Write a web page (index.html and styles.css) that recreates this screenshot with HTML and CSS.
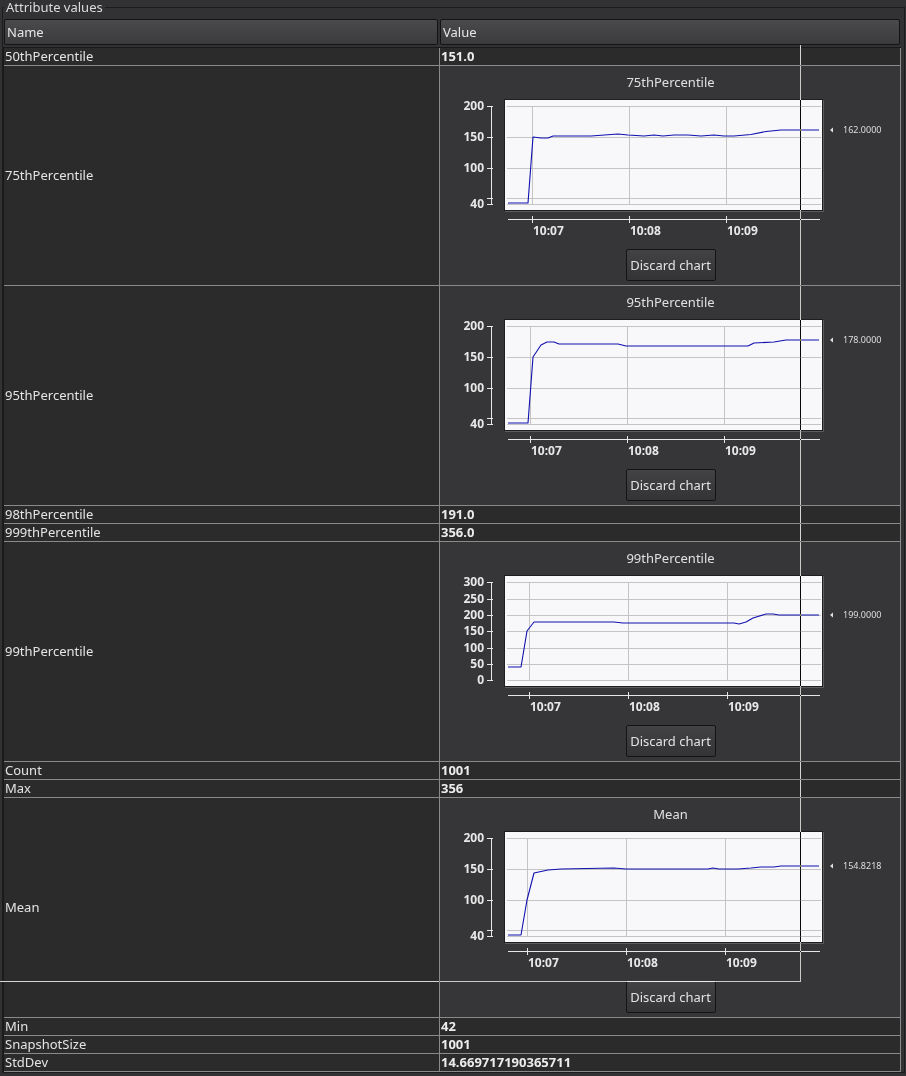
FILE: index.html
```html
<!DOCTYPE html>
<html lang="en">
<head>
  <meta charset="UTF-8" />
  <title>Attribute values</title>
  <link rel="stylesheet" href="styles.css">
</head>
<body>

  <fieldset class="attrs">
    <legend>Attribute values</legend>

    <div class="head">
      <div class="head-cell name-col">Name</div>
      <div class="head-cell value-col">Value</div>
    </div>

    <div class="rows">
      <div class="row">
        <div class="name">50thPercentile</div>
        <div class="value">151.0</div>
      </div>

      <div class="row tall">
        <div class="name">75thPercentile</div>
        <div class="value chart-cell">
          <div class="chart-title">75thPercentile</div>
          <svg class="chart" width="460" height="150">
            <rect class="plot" x="63.5" y="5.5" width="318" height="111"/>
            <path class="plot-edge" d="M64 117.5H382.5V6"/>
            <path class="grid" d="M66 12.5H380M66 43.5H380M66 74.5H380M66 104.5H380M66 110.5H380M91.5 12V111M188.5 12V111M285.5 12V111"/>
            <polyline class="series" points="67,109 87,109 92,43 100,44 107,44 112,42 150,42 177,40 187,41 203,42 213,41 222,42 233,41 247,41 260,42 273,41 283,42 293,42 310,40.5 325,37.5 340,36 378,36"/>
            <path class="axis" d="M50.5 12V111M46 12.5H52M46 43.5H52M46 74.5H52M46 104.5H52M46 110.5H52"/>
            <g class="ylab">
              <text x="43" y="16">200</text>
              <text x="43" y="47">150</text>
              <text x="43" y="78">100</text>
              <text x="43" y="114">40</text>
            </g>
            <path class="axis" d="M67 125.5H379M91.5 122V129M188.5 122V129M285.5 122V129"/>
            <g class="xlab">
              <text x="92" y="141">10:07</text>
              <text x="189" y="141">10:08</text>
              <text x="286" y="141">10:09</text>
            </g>
            <path class="marker" d="M389 36l3-2.5v5z"/>
            <text class="last" x="402" y="39">162.0000</text>
          </svg>
          <button class="discard">Discard chart</button>
        </div>
      </div>

      <div class="row tall">
        <div class="name">95thPercentile</div>
        <div class="value chart-cell">
          <div class="chart-title">95thPercentile</div>
          <svg class="chart" width="460" height="150">
            <rect class="plot" x="63.5" y="5.5" width="318" height="111"/>
            <path class="plot-edge" d="M64 117.5H382.5V6"/>
            <path class="grid" d="M66 12.5H380M66 43.5H380M66 74.5H380M66 104.5H380M66 110.5H380M89.5 12V111M186.5 12V111M283.5 12V111"/>
            <polyline class="series" points="67,109 87,109 92,43 100,31 106,28 113,28 118,30 177,30 185,32 307,32 313,29 333,28 345,26 378,26"/>
            <path class="axis" d="M50.5 12V111M46 12.5H52M46 43.5H52M46 74.5H52M46 104.5H52M46 110.5H52"/>
            <g class="ylab">
              <text x="43" y="16">200</text>
              <text x="43" y="47">150</text>
              <text x="43" y="78">100</text>
              <text x="43" y="114">40</text>
            </g>
            <path class="axis" d="M67 125.5H379M89.5 122V129M186.5 122V129M283.5 122V129"/>
            <g class="xlab">
              <text x="90" y="141">10:07</text>
              <text x="187" y="141">10:08</text>
              <text x="284" y="141">10:09</text>
            </g>
            <path class="marker" d="M389 26l3-2.5v5z"/>
            <text class="last" x="402" y="29">178.0000</text>
          </svg>
          <button class="discard">Discard chart</button>
        </div>
      </div>

      <div class="row">
        <div class="name">98thPercentile</div>
        <div class="value">191.0</div>
      </div>
      <div class="row">
        <div class="name">999thPercentile</div>
        <div class="value">356.0</div>
      </div>

      <div class="row tall">
        <div class="name">99thPercentile</div>
        <div class="value chart-cell">
          <div class="chart-title">99thPercentile</div>
          <svg class="chart" width="460" height="150">
            <rect class="plot" x="63.5" y="5.5" width="318" height="111"/>
            <path class="plot-edge" d="M64 117.5H382.5V6"/>
            <path class="grid" d="M66 12.5H380M66 29.5H380M66 45.5H380M66 61.5H380M66 78.5H380M66 94.5H380M66 110.5H380M88.5 12V111M187.5 12V111M286.5 12V111"/>
            <polyline class="series" points="67,97 80,97 86,61 93,52 173,52 182,53 293,53 298,54 305,52 312,48 325,44 332,44 338,45 378,45"/>
            <path class="axis" d="M50.5 12V111M46 12.5H52M46 29.5H52M46 45.5H52M46 61.5H52M46 78.5H52M46 94.5H52M46 110.5H52"/>
            <g class="ylab">
              <text x="43" y="16">300</text>
              <text x="43" y="33">250</text>
              <text x="43" y="49">200</text>
              <text x="43" y="65">150</text>
              <text x="43" y="82">100</text>
              <text x="43" y="98">50</text>
              <text x="43" y="114">0</text>
            </g>
            <path class="axis" d="M67 125.5H379M88.5 122V129M187.5 122V129M286.5 122V129"/>
            <g class="xlab">
              <text x="89" y="141">10:07</text>
              <text x="188" y="141">10:08</text>
              <text x="287" y="141">10:09</text>
            </g>
            <path class="marker" d="M389 45l3-2.5v5z"/>
            <text class="last" x="402" y="48">199.0000</text>
          </svg>
          <button class="discard">Discard chart</button>
        </div>
      </div>

      <div class="row">
        <div class="name">Count</div>
        <div class="value">1001</div>
      </div>
      <div class="row">
        <div class="name">Max</div>
        <div class="value">356</div>
      </div>

      <div class="row tall">
        <div class="name">Mean</div>
        <div class="value chart-cell">
          <div class="chart-title">Mean</div>
          <svg class="chart" width="460" height="150">
            <rect class="plot" x="63.5" y="5.5" width="318" height="111"/>
            <path class="plot-edge" d="M64 117.5H382.5V6"/>
            <path class="grid" d="M66 12.5H380M66 43.5H380M66 74.5H380M66 104.5H380M66 110.5H380M86.5 12V111M185.5 12V111M284.5 12V111"/>
            <polyline class="series" points="67,109 80,109 86,74 93,47 107,44 120,43 173,42 185,43 267,43 272,42 278,43 297,43 310,42 320,41 333,41 340,40 378,40"/>
            <path class="axis" d="M50.5 12V111M46 12.5H52M46 43.5H52M46 74.5H52M46 104.5H52M46 110.5H52"/>
            <g class="ylab">
              <text x="43" y="16">200</text>
              <text x="43" y="47">150</text>
              <text x="43" y="78">100</text>
              <text x="43" y="114">40</text>
            </g>
            <path class="axis" d="M67 125.5H379M86.5 122V129M185.5 122V129M284.5 122V129"/>
            <g class="xlab">
              <text x="87" y="141">10:07</text>
              <text x="186" y="141">10:08</text>
              <text x="285" y="141">10:09</text>
            </g>
            <path class="marker" d="M389 40l3-2.5v5z"/>
            <text class="last" x="402" y="43">154.8218</text>
          </svg>
          <button class="discard">Discard chart</button>
        </div>
      </div>

      <div class="row">
        <div class="name">Min</div>
        <div class="value">42</div>
      </div>
      <div class="row">
        <div class="name">SnapshotSize</div>
        <div class="value">1001</div>
      </div>
      <div class="row">
        <div class="name">StdDev</div>
        <div class="value">14.669717190365711</div>
      </div>
    </div>
  </fieldset>

  <!-- stale selection frame drawn over the table -->
  <div class="focus-box"></div>

</body>
</html>
```

FILE: styles.css
```css
* {
  box-sizing: border-box;
}

body {
  margin: 0;
  height: 1076px;
  overflow: hidden;
  background-color: #323235;
  font-family: "Noto Sans", "DejaVu Sans", sans-serif;
  font-size: 13px;
  color: #e4e4e4;
}

.attrs {
  margin: 0 1px 0 2px;
  padding: 5px 0 0;
  border: 1px solid #1c1c1e;
  min-width: 0;
}

.attrs legend {
  margin-left: 1px;
  padding: 0 2px;
  line-height: 14px;
  color: #dcdcdc;
}

.head {
  display: flex;
  gap: 2px;
  padding: 0 4px 0 1px;
}

.head-cell {
  height: 26px;
  line-height: 25px;
  padding-left: 2px;
  border: 1px solid #131315;
  border-radius: 2px;
  background: linear-gradient(#4a4a4d, #3b3b3e);
  color: #e6e6e6;
}

.name-col {
  width: 434px;
}

.value-col {
  flex: 1;
}

.rows {
  width: 898px;
  margin-top: 2px;
  border-top: 1px solid #19191a;
  border-left: 1px solid #19191a;
}

.row {
  display: grid;
  grid-template-columns: 436px 461px;
  border-bottom: 1px solid #8a8a8a;
  background-color: #2b2b2b;
}

.row > div {
  height: 17px;
  line-height: 17px;
  padding-left: 1px;
  border-right: 1px solid #8a8a8a;
  white-space: nowrap;
}

.value {
  font-weight: bold;
  color: #ececec;
}

.row.tall > div {
  height: 219px;
}

.row.tall .name {
  display: flex;
  align-items: center;
}

.chart-cell {
  display: flex;
  flex-direction: column;
  align-items: center;
  padding-top: 7px;
  padding-left: 0;
  background-color: #363639;
  font-weight: normal;
}

.chart-title {
  line-height: 18px;
  color: #e0e0e0;
}

.chart {
  display: block;
  margin-top: 3px;
}

.chart .plot {
  fill: #f8f8fa;
  stroke: #1e1e20;
  stroke-width: 1;
}

.chart .plot-edge {
  fill: none;
  stroke: #5c5c5f;
  stroke-width: 1;
}

.chart .grid {
  stroke: #c4c4c4;
  stroke-width: 1;
  fill: none;
}

.chart .series {
  fill: none;
  stroke: #1010b0;
  stroke-width: 1.1;
  stroke-linejoin: round;
}

.chart .axis {
  stroke: #e6e6e6;
  stroke-width: 1;
  fill: none;
}

.chart text {
  font-family: "Noto Sans", "DejaVu Sans", sans-serif;
  font-size: 12px;
  font-weight: bold;
  fill: #e8e8e8;
}

.chart .ylab text {
  text-anchor: end;
}

.chart .marker {
  fill: #e0e0e0;
}

.chart .last {
  font-size: 9px;
  font-weight: normal;
  fill: #dedede;
}

.discard {
  width: 90px;
  height: 32px;
  margin-top: 5px;
  padding: 0;
  border: 1px solid #141416;
  border-radius: 2px;
  background: linear-gradient(#434346, #343437);
  color: #e2e2e2;
  font-family: "Noto Sans", "DejaVu Sans", sans-serif;
  font-size: 13px;
}

.focus-box {
  position: absolute;
  left: 0;
  top: 45px;
  width: 801px;
  height: 937px;
  border-right: 1px solid #fff;
  border-bottom: 1px solid #fff;
  mix-blend-mode: difference;
  pointer-events: none;
}
```
